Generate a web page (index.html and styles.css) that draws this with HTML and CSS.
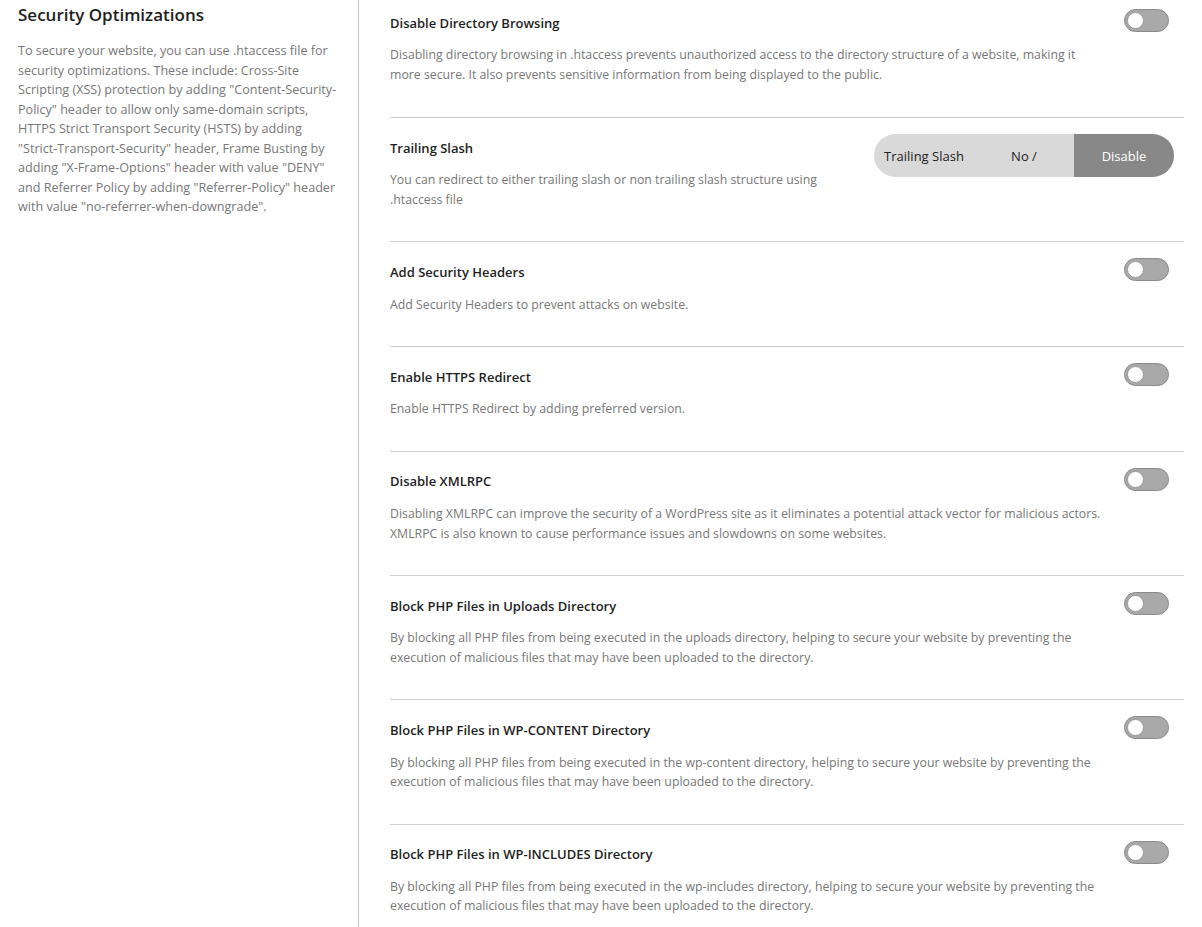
FILE: index.html
```html
<!DOCTYPE html>
<html lang="en">
<head>
<meta charset="utf-8">
<title>Security Optimizations</title>
<link rel="stylesheet" href="styles.css">
</head>
<body>
<div class="page">
  <aside class="side">
    <h2 class="side-title">Security Optimizations</h2>
    <p class="side-text">To secure your website, you can use .htaccess file for security optimizations. These include: Cross-Site Scripting (XSS) protection by adding "Content-Security-Policy" header to allow only same-domain scripts, HTTPS Strict Transport Security (HSTS) by adding "Strict-Transport-Security" header, Frame Busting by adding "X-Frame-Options" header with value "DENY" and Referrer Policy by adding "Referrer-Policy" header with value "no-referrer-when-downgrade".</p>
  </aside>
  <main class="main">
    <section class="row first">
      <div class="info">
        <h3 class="title">Disable Directory Browsing</h3>
        <p class="desc">Disabling directory browsing in .htaccess prevents unauthorized access to the directory structure of a website, making it more secure. It also prevents sensitive information from being displayed to the public.</p>
      </div>
      <span class="toggle"><span class="knob"></span></span>
    </section>
    <section class="row">
      <div class="info">
        <h3 class="title">Trailing Slash</h3>
        <p class="desc">You can redirect to either trailing slash or non trailing slash structure using .htaccess file</p>
      </div>
      <div class="seg">
        <span class="seg-item">Trailing Slash</span>
        <span class="seg-item">No /</span>
        <span class="seg-item active">Disable</span>
      </div>
    </section>
    <section class="row">
      <div class="info">
        <h3 class="title">Add Security Headers</h3>
        <p class="desc">Add Security Headers to prevent attacks on website.</p>
      </div>
      <span class="toggle"><span class="knob"></span></span>
    </section>
    <section class="row">
      <div class="info">
        <h3 class="title">Enable HTTPS Redirect</h3>
        <p class="desc">Enable HTTPS Redirect by adding preferred version.</p>
      </div>
      <span class="toggle"><span class="knob"></span></span>
    </section>
    <section class="row">
      <div class="info">
        <h3 class="title">Disable XMLRPC</h3>
        <p class="desc">Disabling XMLRPC can improve the security of a WordPress site as it eliminates a potential attack vector for malicious actors. XMLRPC is also known to cause performance issues and slowdowns on some websites.</p>
      </div>
      <span class="toggle"><span class="knob"></span></span>
    </section>
    <section class="row">
      <div class="info">
        <h3 class="title">Block PHP Files in Uploads Directory</h3>
        <p class="desc">By blocking all PHP files from being executed in the uploads directory, helping to secure your website by preventing the execution of malicious files that may have been uploaded to the directory.</p>
      </div>
      <span class="toggle"><span class="knob"></span></span>
    </section>
    <section class="row">
      <div class="info">
        <h3 class="title">Block PHP Files in WP-CONTENT Directory</h3>
        <p class="desc">By blocking all PHP files from being executed in the wp-content directory, helping to secure your website by preventing the execution of malicious files that may have been uploaded to the directory.</p>
      </div>
      <span class="toggle"><span class="knob"></span></span>
    </section>
    <section class="row">
      <div class="info">
        <h3 class="title">Block PHP Files in WP-INCLUDES Directory</h3>
        <p class="desc">By blocking all PHP files from being executed in the wp-includes directory, helping to secure your website by preventing the execution of malicious files that may have been uploaded to the directory.</p>
      </div>
      <span class="toggle"><span class="knob"></span></span>
    </section>
  </main>
</div>
</body>
</html>
```
FILE: styles.css
```css
* { box-sizing: border-box; }
html, body {
  margin: 0;
  padding: 0;
  background: #fff;
  font-family: "Open Sans", "Liberation Sans", sans-serif;
  height: 100%;
  overflow: hidden;
}
.page {
  display: flex;
  min-height: 927px;
}
.side {
  width: 359px;
  flex: none;
  border-right: 1px solid #c3c3c3;
  padding: 4px 18px 0 18px;
}
.side-title {
  margin: 0;
  font-size: 17px;
  font-weight: 600;
  color: #1e1e1e;
  line-height: 22px;
}
.side-text {
  margin: 15px 0 0;
  font-size: 12.6px;
  line-height: 19.5px;
  color: #777;
}
.main {
  flex: 1;
  padding: 0 18px 0 31px;
}
.row {
  display: flex;
  gap: 20px;
  padding: 19.5px 0 32px;
  border-top: 1px solid #cfcfcf;
}
.row.first {
  border-top: none;
  padding-top: 12.5px;
  padding-bottom: 32.75px;
}
.info {
  flex: 1;
  min-width: 0;
}
.title {
  margin: 0;
  font-size: 13px;
  font-weight: 600;
  line-height: 21px;
  color: #1e1e1e;
}
.desc {
  margin: 11.75px 0 0;
  font-size: 12.3px;
  line-height: 19.5px;
  color: #777;
}
.toggle {
  flex: none;
  width: 45px;
  height: 23px;
  margin: -3.5px 15px 0 0;
  border-radius: 12px;
  background: #a9a9a9;
  border: 1.5px solid #8a8a8a;
  display: flex;
  align-items: center;
  padding-left: 2px;
}
.knob {
  width: 17px;
  height: 17px;
  border-radius: 50%;
  background: #fff;
  border: 1px solid #9a9a9a;
}
.seg {
  flex: none;
  display: flex;
  height: 43px;
  margin: -3.5px 10px 0 0;
  border-radius: 22px;
  overflow: hidden;
  background: #d9d9d9;
}
.seg-item {
  width: 100px;
  display: flex;
  align-items: center;
  justify-content: center;
  font-size: 13px;
  color: #222;
}
.seg-item.active {
  background: #888;
  color: #fff;
}
```
